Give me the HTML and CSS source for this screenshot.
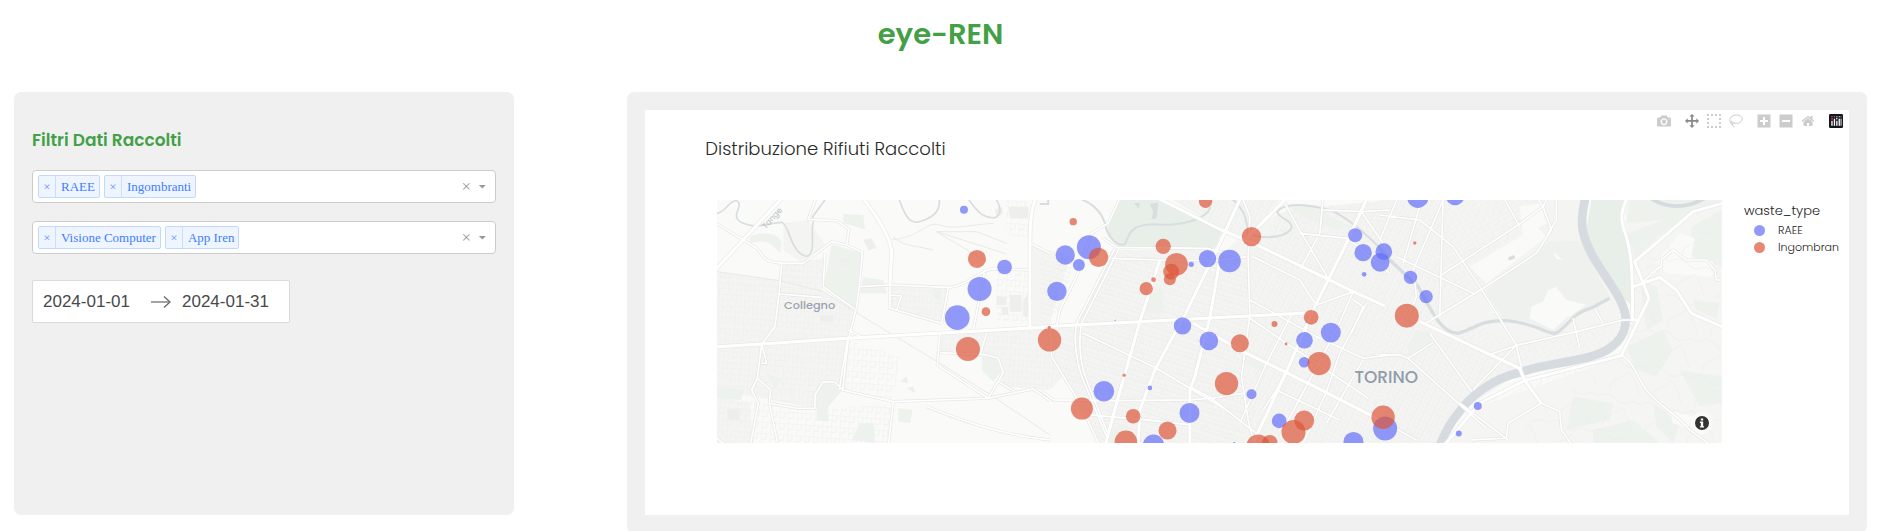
FILE: index.html
```html
<!DOCTYPE html>
<html lang="it">
<head>
<meta charset="utf-8">
<meta name="viewport" content="width=device-width, initial-scale=1">
<title>eye-REN</title>
<link rel="stylesheet" href="styles.css">
</head>
<body>
<h1 class="brand">eye-REN</h1>
<main class="layout">
  <section class="card filters">
    <h2 class="filters-title">Filtri Dati Raccolti</h2>
    <div class="select" role="group" aria-label="Tipo di rifiuto">
      <span class="chip"><button class="chip-remove" aria-label="Rimuovi RAEE">×</button><span class="chip-label">RAEE</span></span>
      <span class="chip"><button class="chip-remove" aria-label="Rimuovi Ingombranti">×</button><span class="chip-label">Ingombranti</span></span>
      <input class="select-input" type="text" aria-label="Cerca tipo di rifiuto">
      <button class="select-clear" aria-label="Cancella tutto">×</button>
      <button class="select-arrow" aria-label="Apri elenco"></button>
    </div>
    <div class="select" role="group" aria-label="Sorgente">
      <span class="chip"><button class="chip-remove" aria-label="Rimuovi Visione Computer">×</button><span class="chip-label">Visione Computer</span></span>
      <span class="chip"><button class="chip-remove" aria-label="Rimuovi App Iren">×</button><span class="chip-label">App Iren</span></span>
      <input class="select-input" type="text" aria-label="Cerca sorgente">
      <button class="select-clear" aria-label="Cancella tutto">×</button>
      <button class="select-arrow" aria-label="Apri elenco"></button>
    </div>
    <div class="dates">
      <input class="date-input" type="text" value="2024-01-01" aria-label="Data iniziale">
      <svg class="date-arrow" viewBox="0 0 20 14" aria-hidden="true"><path d="M0 7H19" stroke="#8a8c8e" stroke-width="1.6"/><path d="M13 1.500L19 7L13 12.500" fill="none" stroke="#66686a" stroke-width="1.300"/></svg>
      <input class="date-input" type="text" value="2024-01-31" aria-label="Data finale">
    </div>
  </section>

  <section class="card chart">
    <div class="plot">
      <div class="modebar">
        <div class="modebar-group">
          <button class="tool" aria-label="Scarica immagine"><svg viewBox="0 0 1000 1000"><path transform="matrix(1 0 0 -1 0 850)" d="m500 450c-83 0-150-67-150-150 0-83 67-150 150-150 83 0 150 67 150 150 0 83-67 150-150 150z m400 150h-120c-16 0-34 13-39 29l-31 93c-6 15-23 28-40 28h-340c-16 0-34-13-39-28l-31-94c-6-15-23-28-40-28h-120c-55 0-100-45-100-100v-450c0-55 45-100 100-100h800c55 0 100 45 100 100v450c0 55-45 100-100 100z m-400-550c-138 0-250 112-250 250 0 138 112 250 250 250 138 0 250-112 250-250 0-138-112-250-250-250z m365 380c-19 0-35 16-35 35 0 19 16 35 35 35 19 0 35-16 35-35 0-19-16-35-35-35z"/></svg></button>
        </div>
        <div class="modebar-group">
          <button class="tool active" aria-label="Sposta"><svg viewBox="0 0 1000 1000"><path transform="matrix(1 0 0 -1 0 850)" d="m1000 350l-187 188 0-125-250 0 0 250 125 0-188 187-187-187 125 0 0-250-250 0 0 125-188-188 186-187 0 125 252 0 0-250-125 0 187-188 188 188-125 0 0 250 250 0 0-126 187 188z"/></svg></button>
          <button class="tool" aria-label="Selezione rettangolare"><svg viewBox="0 0 7 7"><path d="M0 0h1v1h-1zM2 0h1v1h-1zM4 0h1v1h-1zM6 0h1v1h-1zM0 2h1v1h-1zM6 2h1v1h-1zM0 4h1v1h-1zM6 4h1v1h-1zM0 6h1v1h-1zM2 6h1v1h-1zM4 6h1v1h-1zM6 6h1v1h-1z"/></svg></button>
          <button class="tool" aria-label="Selezione lazo"><svg viewBox="0 0 14 14"><path class="line" d="M4 9.500C1.500 9 .7 7.500.8 5.800C1 2.800 4 1 7.500 1C11 1 13.300 2.800 13.200 5C13 8 10 9.600 6.200 9.300C4 8.600 3 6.800 2 7.500C.9 8.800 2 10.300 3.400 10C5 9.600 5 8.700 4.600 8.400M3.400 10C3.300 11.500 4.200 12.500 5.600 13"/></svg></button>
        </div>
        <div class="modebar-group">
          <button class="tool" aria-label="Ingrandisci"><svg viewBox="0 0 14 14"><path fill-rule="evenodd" d="M.5.5h13v13h-13zM6 3v3H3v2h3v3h2V8h3V6H8V3z"/></svg></button>
          <button class="tool" aria-label="Riduci"><svg viewBox="0 0 14 14"><path fill-rule="evenodd" d="M.5.5h13v13h-13zM3 6v2h8V6z"/></svg></button>
          <button class="tool" aria-label="Ripristina vista"><svg viewBox="0 0 930 1000"><path transform="matrix(1 0 0 -1 0 850)" d="m786 296v-267q0-15-11-26t-25-10h-214v214h-143v-214h-214q-15 0-25 10t-11 26v267q0 1 0 2t0 2l321 264 321-264q1-1 1-4z m124 39l-34-41q-5-5-12-6h-2q-7 0-12 3l-386 322-386-322q-7-4-13-4-7 2-12 7l-35 41q-4 5-3 13t6 12l401 334q18 15 42 15t43-15l136-114v109q0 8 5 13t13 5h107q8 0 13-5t5-13v-227l122-102q5-5 6-12t-4-13z"/></svg></button>
        </div>
        <a class="tool" href="#" aria-label="Plotly"><svg viewBox="0 0 14 14"><rect width="14" height="14" rx="1.200" fill="#16161d"/><g fill="#fff"><rect x="2.300" y="6.800" width="1.300" height="5"/><rect x="4.800" y="4.700" width="1.300" height="7.100"/><rect x="7.200" y="6.800" width="1.300" height="5"/><rect x="9.600" y="4.700" width="1.300" height="7.100"/><circle cx="7.800" cy="4.800" r=".8"/><rect x="11.600" y="4.700" width=".9" height="7.100"/></g><g fill="#d9468c"><circle cx="3" cy="2.800" r=".8"/><circle cx="3" cy="4.900" r=".8"/><circle cx="5.500" cy="2.800" r=".8"/></g><g fill="#8ec8d8"><circle cx="7.900" cy="2.800" r=".8"/><circle cx="10.300" cy="2.800" r=".8"/><circle cx="12" cy="2.800" r=".6"/></g></svg></a>
      </div>
      <h3 class="plot-title">Distribuzione Rifiuti Raccolti</h3>
      <div class="plot-body">
        <div class="map">
          <svg class="map-canvas" viewBox="0 0 3015 729" role="img" aria-label="Mappa di Torino">
            <defs>
              <pattern id="gridA" width="26" height="34" patternUnits="userSpaceOnUse" patternTransform="rotate(4)"><path d="M0 0H26M0 18H15M0 0V34M15 0V18" class="street"/></pattern>
              <pattern id="gridB" width="22" height="28" patternUnits="userSpaceOnUse" patternTransform="rotate(17)"><path d="M0 0H22M0 15H22M0 0V28M12 0V15" class="street"/></pattern>
              <pattern id="gridC" width="24" height="26" patternUnits="userSpaceOnUse" patternTransform="rotate(27)"><path d="M0 0H24M0 13H14M0 0V26M14 0V26" class="street"/></pattern>
              <pattern id="gridD" width="34" height="28" patternUnits="userSpaceOnUse" patternTransform="rotate(-31)"><path d="M0 0H34M0 16H20M0 0V28M20 0V16" class="street"/></pattern>
              <pattern id="hills" width="130" height="110" patternUnits="userSpaceOnUse" patternTransform="rotate(12)"><path d="M0 20C30 0 50 50 80 30S110 40 130 20M20 110C10 80 50 75 60 55S90 80 110 110" class="street"/></pattern>
              <g id="major">
                <g transform="translate(-51 -30)">
                  <path d="M40 471L185 462L455 444L820 424L1050 411M40 246L250 20M485 20C540 90 575 150 575 190L570 285M1010 20C990 60 990 120 990 200V410"/>
                </g>
                <g transform="translate(969 -30)">
                  <path d="M345 20L545 120L630 155L860 265L940 305L1035 348M604 20L540 160L440 365L345 540L300 660L295 770M0 411L50 408L300 395L510 384L820 368M984 20L915 170L825 350L740 545L635 770M540 210L510 384L465 560L450 600V770M460 400L610 485L740 548L860 608L1020 690M735 30L620 145M360 210L300 395L230 640L195 770"/>
                </g>
                <g transform="translate(1989 -30)">
                  <path d="M744 20C720 70 722 90 740 140C755 190 760 250 758 390H778M1036 38L940 65L765 215L808 325L725 497L435 572L300 640L190 770M120 395L420 535L435 572L485 640M760 290L840 262L890 300L935 370L1036 414"/>
                </g>
              </g>
              <g id="mid">
                <g transform="translate(-51 -30)">
                  <path d="M40 95L130 150L170 175C200 215 200 215 250 220H310L395 155L440 165L487 187L478 290L470 350L445 450L428 600M375 190L370 290L460 355M349 20L325 88L410 92L447 118L440 165M245 222L237 312L225 410L185 462L172 565L212 600L208 640L290 655H345V615L370 575L405 577L428 600L580 635L865 625L1000 597L1050 632M237 312L365 322M185 462L200 520L185 520M172 565L155 600L175 640L150 770M208 640L235 770M580 635L565 770M680 650C780 690 900 735 1050 750M478 290L570 285L745 292C800 290 840 240 880 236L990 240M745 292L725 400M570 285V355L725 400M570 315L605 318L590 360M720 430L712 525L865 625L910 548L895 505L860 495L720 488M860 430L840 495M855 240L820 420M442 450L418 600M895 575L945 605M990 160L1050 190M40 735L80 770M445 420L490 444"/>
                </g>
                <g transform="translate(969 -30)">
                  <path d="M610 30L630 80L625 200L630 375L605 560L625 690L645 770M215 205L350 210L530 212L620 200M240 25L205 100L155 130L110 260L60 360L50 408M225 175L110 400C100 450 110 520 130 570L200 740M238 175L125 400C115 450 120 520 140 570L205 735M190 145L230 172L500 175L600 200M30 410L35 500L120 640L180 770M0 600L40 630L230 632L450 630L515 625L610 610M450 590L515 625L700 770M735 40L785 130L865 265M780 130L925 145M850 20L840 130L780 240M850 60L970 65L1050 60M830 345L940 305L890 420L740 700M980 340L900 490L860 605L790 760M965 65L1050 190M970 510L860 700M1050 495L970 505L830 440L630 330M755 375L680 520L600 700M630 385L985 625M130 430L350 535L560 660M150 675L320 690L450 705M640 200L780 270L825 340M930 150L1050 250M940 330L970 350L935 430M740 540L710 600L670 660M710 600L900 690"/>
                </g>
                <g transform="translate(1989 -30)">
                  <path d="M0 75L120 90L220 170L300 290L410 465L425 535M130 405L310 295L470 190L515 120L490 50L470 20M530 20V90L505 130M185 255L415 105L490 50L505 20M370 20L420 110M128 20L70 220M190 20L180 380M190 30L100 240L110 320L80 390M55 20L0 150M50 200L280 310M0 495L60 495L85 505L160 458M85 505L320 715M150 430L275 605M410 465L280 600M325 495L415 465L590 425L730 390H758M580 385L600 475M645 355L670 400M485 640L540 665L545 720L580 770M485 640L385 700L380 745L275 750M240 640L385 750M785 280C820 250 820 240 845 230V210L880 180L920 210H980L1005 240L1010 270H1036M725 497C760 510 770 560 800 600C840 650 900 680 930 720L1000 770M0 690L110 750"/>
                </g>
              </g>
            </defs>

            <rect width="3015" height="729" fill="#fafaf8"/>

            <g transform="translate(-51 -30)">
              <path class="urban" d="M51 245L240 272L370 305L460 355L435 600L345 615L345 655L51 600ZM245 225L370 205L365 320L240 310ZM575 290L745 295L725 398L570 355ZM720 432L1050 415L1055 500L1090 560L1050 600L910 590L895 505L715 490ZM51 620L150 640L160 759H51ZM995 165L1110 200L1060 360L1050 410H995ZM250 100L325 90L380 170L300 215L250 180Z"/>
              <path fill="url(#gridA)" d="M51 245L240 272L370 305L460 355L435 600L345 615L345 655L51 600ZM245 225L370 205L365 320L240 310ZM575 290L745 295L725 398L570 355ZM720 432L1050 415L1055 500L1090 560L1050 600L910 590L895 505L715 490ZM51 620L340 660L580 640L560 759H51ZM440 450L600 500L580 630L430 600ZM890 250L990 245V400H890ZM920 30H985V140H920Z"/>
              <path class="green" d="M395 163L487 190L465 355L372 290ZM430 72L490 75L495 118L430 100ZM490 262L550 270L560 310L480 310ZM845 500L890 505L905 545L880 575L845 540ZM350 590L385 580L428 600L385 650L385 695L350 690ZM480 700L520 700L525 759L455 750ZM595 655L638 660L630 700L595 695ZM150 140C190 120 240 130 245 160L240 190C210 150 190 150 150 160ZM51 590L130 600L125 630L51 625ZM200 550L245 570L225 595ZM700 290L725 300L720 330L703 325Z"/>
              <path class="block" d="M885 60L905 50L910 70L890 82ZM925 50H985V85H930ZM890 320H920V345H890ZM930 315H965V365H930ZM985 310H988V380H970V330ZM905 350H925V375H905ZM420 210L445 205L450 222L425 228ZM490 150L515 145L530 175L505 180ZM600 575L620 560L625 580ZM620 595L640 590L645 610ZM360 375H400V395H360ZM80 660L120 655L118 690L85 690Z"/>
              <path class="minor" d="M575 148C650 150 680 90 720 105S800 105 880 100M700 180C640 165 610 170 580 140M710 125L920 192M710 125L830 125L920 160M710 125L860 215M51 245L240 272L370 305L480 375L720 520L865 610L1050 735"/>
              <path class="stream" d="M40 72C80 70 85 30 110 32C135 45 90 75 120 95C170 120 200 100 245 97C270 105 270 190 320 199C350 190 330 130 340 95L338 80L375 30M595 20C620 100 640 98 655 96C700 85 725 60 717 20M800 20C840 80 860 85 885 83C905 75 905 55 885 20"/>
            </g>

            <g transform="translate(969 -30)">
              <path class="urban" d="M215 180H560L620 120L740 60L1050 30V759H180L120 640L35 500L30 420L110 400ZM400 30H720L620 140L550 120Z"/>
              <path fill="url(#gridB)" d="M215 180H560L620 200L630 375L600 480L620 759H180L120 640L35 500L30 420L110 400ZM0 200L110 200L60 360L0 400Z"/>
              <path fill="url(#gridC)" d="M620 200L740 60L1050 30V759H620L600 480L630 375ZM400 30H720L620 140L550 120Z"/>
              <path class="park" d="M235 30H360L548 122L525 175L430 180L350 178L250 168L205 140L203 105Z"/>
              <path class="green" d="M735 45L830 45L860 75L930 110L890 120L800 85ZM320 290L370 300V370H320ZM615 490L690 510L670 545L620 520ZM200 725L260 700L300 759H205Z"/>
              <path class="stream wide" d="M125 28C180 50 195 90 200 120C215 150 235 170 255 163C270 130 270 105 340 103C420 110 500 90 512 50M575 25C615 60 620 85 625 130C660 145 730 150 755 115C760 90 715 85 712 65C740 30 830 50 870 60C920 80 980 130 1050 205M0 42H25V30"/>
              <path class="water" d="M282 40L300 38L298 56ZM330 42L355 38L350 85L335 88L340 65Z"/>
            </g>

            <g transform="translate(1989 -30)">
              <path class="urban" d="M0 30H600L620 180L740 360L720 460L640 498L420 548L235 670L180 759H0Z"/>
              <path fill="url(#gridC)" d="M0 30H180V380L140 410L420 540L235 670L180 759H0Z"/>
              <path fill="url(#gridD)" d="M190 30H480L510 120L310 290L190 370ZM140 410L300 400L410 465L700 395L720 460L640 490L420 540ZM440 580L720 505L640 590L500 640L380 690L370 740L200 759L300 650Z"/>
              <path class="land" d="M270 230L470 110L500 140L320 280ZM420 50L480 40L500 100L430 140ZM310 310L350 330L380 380L340 370Z"/>
              <path class="field" d="M350 275L510 155L600 152L640 230L690 320L570 380L525 430L450 395L370 385L315 305Z"/>
              <path class="land" d="M455 350L490 335L505 300L530 290L560 330L620 345L560 385L520 420L450 385ZM520 185L550 210L530 208Z"/>
              <path class="slope" d="M735 30H1026V759H200L300 650L725 500L755 390Z"/>
              <path class="park" d="M635 30H738L722 90L750 200L755 345L700 300L640 200L618 130Z"/>
              <path class="green" d="M750 30H1026V40L940 60L830 145L765 205L745 130L850 90L740 100ZM935 110L1026 60V230L930 200ZM780 270L830 290L850 390L800 420ZM740 470L850 420L880 480L830 560L770 540ZM900 540L1026 560V640L960 650ZM580 620L700 640L690 690L560 720ZM640 720L760 690L840 759H640ZM820 640L900 700L880 759L830 710ZM80 470L110 420L150 430L160 460L90 500ZM940 330L1020 340L1010 385L950 360Z"/>
              <path class="land" d="M830 215L900 130L945 145L935 200L1000 215V260L860 250ZM870 660L940 680L925 715L880 700Z"/>
              <path fill="url(#hills)" d="M770 220L1026 60V759H400L500 640L730 500Z"/>
              <path class="stream broad" d="M0 175L30 210L115 290C150 350 180 430 235 430C290 415 300 390 380 392C470 400 500 432 525 430C560 420 570 370 640 352L690 325M386 207L405 200"/>
              <path class="river" d="M620 10C600 90 600 130 640 200C680 270 735 330 738 385C740 440 700 480 640 498C560 520 480 525 420 548C340 565 270 620 235 670C210 700 190 740 175 780"/>
              <path class="river arc" d="M810 22C860 57 920 57 980 22"/>
            </g>

            <use href="#mid" class="mid-casing"/>
            <use href="#major" class="major-casing"/>
            <use href="#mid" class="mid-road"/>
            <use href="#major" class="major-road"/>

            <text class="road-label" transform="translate(146 88) rotate(-48)">Tange</text>
            <text class="town-label" x="201" y="326">Collegno</text>
            <text class="city-label" x="1913" y="550">TORINO</text>

            <g class="raee">
              <g transform="translate(-51 -30)"><circle cx="792" cy="59" r="12"/><circle cx="914" cy="231" r="22"/><circle cx="839" cy="297" r="36"/><circle cx="772" cy="383" r="37"/></g>
              <g transform="translate(969 -30)"><circle cx="76" cy="195" r="29"/><circle cx="147" cy="172" r="36"/><circle cx="117" cy="225" r="18"/><circle cx="51" cy="304" r="29"/><circle cx="454" cy="223" r="8"/><circle cx="503" cy="206" r="26"/><circle cx="569" cy="213" r="34"/><circle cx="946" cy="136" r="21"/><circle cx="970" cy="188" r="26"/><circle cx="1032" cy="185" r="25"/><circle cx="1021" cy="217" r="28"/><circle cx="973" cy="253" r="7"/><circle cx="428" cy="408" r="26"/><circle cx="226" cy="391" r="2"/><circle cx="507" cy="453" r="28"/><circle cx="873" cy="428" r="30"/><circle cx="794" cy="451" r="25"/><circle cx="793" cy="517" r="16"/><circle cx="635" cy="613" r="15"/><circle cx="192" cy="604" r="31"/><circle cx="330" cy="594" r="7"/><circle cx="449" cy="669" r="30"/><circle cx="341" cy="766" r="32"/><circle cx="718" cy="693" r="22"/><circle cx="941" cy="756" r="30"/><circle cx="1036" cy="716" r="36"/><circle cx="583" cy="760" r="4"/></g>
              <g transform="translate(1989 -30)"><circle cx="114" cy="22" r="32"/><circle cx="226" cy="18" r="28"/><circle cx="92" cy="262" r="20"/><circle cx="139" cy="320" r="20"/><circle cx="294" cy="648" r="12"/><circle cx="237" cy="731" r="9"/></g>
            </g>
            <g class="ingombranti">
              <g transform="translate(-51 -30)"><circle cx="831" cy="207" r="27"/><circle cx="858" cy="365" r="13"/><circle cx="804" cy="477" r="36"/></g>
              <g transform="translate(969 -30)"><circle cx="100" cy="95" r="11"/><circle cx="176" cy="202" r="29"/><circle cx="370" cy="169" r="23"/><circle cx="410" cy="223" r="34"/><circle cx="394" cy="245" r="24"/><circle cx="390" cy="268" r="18"/><circle cx="341" cy="269" r="7"/><circle cx="319" cy="296" r="20"/><circle cx="635" cy="140" r="29"/><circle cx="497" cy="34" r="20"/><circle cx="29" cy="450" r="35"/><circle cx="28" cy="412" r="5"/><circle cx="600" cy="460" r="27"/><circle cx="704" cy="402" r="9"/><circle cx="739" cy="462" r="4"/><circle cx="814" cy="382" r="22"/><circle cx="838" cy="521" r="35"/><circle cx="560" cy="581" r="35"/><circle cx="253" cy="556" r="5"/><circle cx="126" cy="656" r="33"/><circle cx="280" cy="679" r="22"/><circle cx="383" cy="722" r="27"/><circle cx="258" cy="756" r="34"/><circle cx="793" cy="692" r="30"/><circle cx="761" cy="726" r="36"/><circle cx="655" cy="770" r="36"/><circle cx="690" cy="758" r="23"/><circle cx="1030" cy="682" r="35"/></g>
              <g transform="translate(1989 -30)"><circle cx="105" cy="159" r="5"/><circle cx="81" cy="377" r="36"/></g>
            </g>
          </svg>
          <button class="map-info" aria-label="Attribuzione"><svg viewBox="0 0 20 20"><path fill="#333" fill-rule="evenodd" d="M10 0a10 10 0 1 0 0 20a10 10 0 0 0 0-20zM8.300 3.500h3.400v3H8.300zM7 8h4.700v6.500H13V16.500H7V14.500h1.300V10H7z"/></svg></button>
        </div>
        <div class="legend">
          <p class="legend-title">waste_type</p>
          <ul class="legend-list">
            <li class="legend-item"><span class="dot dot-raee"></span>RAEE</li>
            <li class="legend-item"><span class="dot dot-ingombranti"></span>Ingombran</li>
          </ul>
        </div>
      </div>
    </div>
  </section>
</main>
</body>
</html>
```

FILE: styles.css
```css
* { box-sizing: border-box; }

body {
  margin: 0;
  padding: 0 10px 0 14px;
  background: #fff;
  color: #444;
  font-family: Poppins, Inter, sans-serif;
  overflow-x: hidden;
}

button, input { font: inherit; color: inherit; border: 0; padding: 0; background: none; }
button { cursor: pointer; }

.brand {
  margin: 0;
  padding: 12px 0 36px;
  color: #43a047;
  font-size: 29px;
  font-weight: 600;
  line-height: 44px;
  text-align: center;
}

.layout {
  display: grid;
  grid-template-columns: 27% minmax(0, 1fr);
  gap: 113px;
  align-items: start;
}

.card { min-width: 0; background: #f0f0f0; border-radius: 7px; padding: 18px; }

/* Filters */
.filters { min-height: 423px; }

.filters-title {
  margin: 0;
  padding: 18px 0;
  color: #43a047;
  font-size: 17px;
  font-weight: 600;
  line-height: 24px;
}

.select {
  display: flex;
  align-items: center;
  height: 33px;
  margin-bottom: 18px;
  padding: 0 9px 0 5px;
  gap: 4px;
  border: 1px solid #ccc;
  border-radius: 4px;
  background: #fff;
  font-family: "Liberation Serif", serif;
}

.chip {
  display: flex;
  height: 23px;
  border: 1px solid #c2d9ff;
  border-radius: 2px;
  background: #eff5ff;
  color: #3f7dff;
  font-size: 13px;
  line-height: 21px;
  white-space: nowrap;
}

.chip-remove { width: 17px; border-right: 1px solid #c2d9ff; line-height: 18px; opacity: .8; }
.chip-label { padding: 0 4px 0 5px; }
.select-input { flex: 1; min-width: 0; outline: 0; }
.select-clear { width: 16px; color: #999; font-size: 17px; line-height: 20px; }

.select-arrow {
  width: 8px;
  height: 4px;
  background: #999;
  clip-path: polygon(0 0, 100% 0, 50% 100%);
}

.dates {
  display: inline-flex;
  align-items: center;
  height: 43px;
  margin-top: 8px;
  padding: 0 9px 0 10px;
  border: 1px solid #dbdbdb;
  border-radius: 2px;
  background: #fff;
  color: #484848;
  font-family: "Liberation Sans", sans-serif;
  font-size: 17px;
}

.date-input { width: 98px; outline: 0; }
.date-arrow { width: 20px; height: 14px; margin: 0 11px 0 10px; }

/* Chart */
.plot { position: relative; background: #fff; padding-bottom: 72px; }

.plot-title {
  margin: 0;
  padding: 25px 60px 37px;
  color: #2a2a2a;
  font-size: 18px;
  font-weight: 300;
  line-height: 28px;
}

.plot-body { display: flex; padding-left: 72px; }
.map { position: relative; flex: 1; min-width: 0; }
.map-canvas { display: block; width: 100%; height: auto; }

.modebar { position: absolute; top: 4px; right: 6px; display: flex; gap: 14px; }
.modebar-group { display: flex; gap: 8px; }
.tool { display: block; width: 14px; height: 14px; fill: #ccc; }
.tool.active { fill: #888; }
.tool svg { display: block; width: 14px; height: 14px; }
.line { fill: none; stroke: #ccc; stroke-width: 1; }

.map-info {
  position: absolute;
  right: 9px;
  bottom: 9px;
  width: 22px;
  height: 22px;
  padding: 4px;
  border-radius: 50%;
  background: rgba(255, 255, 255, .5);
}
.map-info svg { display: block; width: 14px; height: 14px; }

.legend { width: 127px; padding-left: 22px; }
.legend-title { margin: 0; font-size: 13px; font-weight: 300; line-height: 22px; color: #222; }
.legend-list { list-style: none; margin: 0; padding: 0; }
.legend-item {
  display: flex;
  align-items: center;
  gap: 13px;
  padding-left: 10px;
  font-size: 11px;
  font-weight: 300;
  line-height: 17px;
  color: #222;
}
.dot { width: 11px; height: 11px; border-radius: 50%; opacity: .7; }
.dot-raee { background: #636efa; }
.dot-ingombranti { background: #dd5539; }

/* Map */
.street { fill: none; stroke: #ecedec; stroke-width: 2; }
.urban { fill: #f4f4f3; }
.land { fill: #fafaf8; }
.slope { fill: #f5f5f3; }
.green { fill: #edf2ed; }
.park { fill: #e8eee8; }
.field { fill: #eff1ef; }
.block { fill: #eeeeec; }
.water { fill: #d8dee0; }
.minor { fill: none; stroke: #e9e9e8; stroke-width: 3; }
.stream { fill: none; stroke: #d8dee0; stroke-width: 5; }
.wide { stroke-width: 6; }
.broad { stroke-width: 10; }
.river { fill: none; stroke: #d5dbde; stroke-width: 26; }
.arc { stroke-width: 12; }
.mid-casing, .major-casing, .mid-road, .major-road { fill: none; stroke-linejoin: round; }
.mid-casing { stroke: #e6e6e5; stroke-width: 9; }
.major-casing { stroke: #e9e9e8; stroke-width: 13; }
.mid-road { stroke: #fff; stroke-width: 5; }
.major-road { stroke: #fff; stroke-width: 9; }
.town-label { fill: #97a3ae; font-size: 34px; font-weight: 500; }
.city-label { fill: #8f9ca9; font-size: 51px; font-weight: 500; }
.road-label { fill: #b4bcc2; font-size: 24px; }
.raee { fill: #636efa; }
.ingombranti { fill: #dd5539; }
.raee circle, .ingombranti circle { fill-opacity: .7; }
```
